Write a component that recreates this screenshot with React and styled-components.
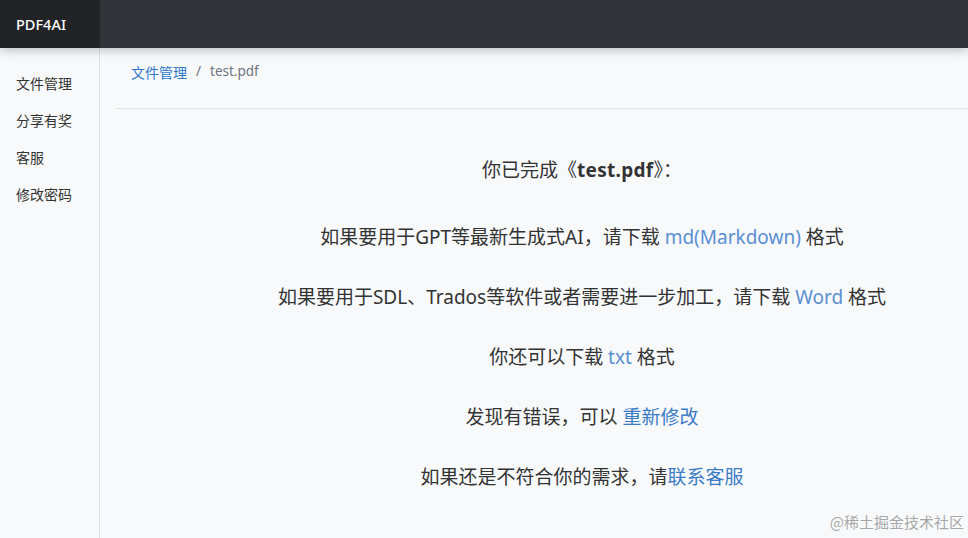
import styled, { createGlobalStyle } from "styled-components";

const GlobalStyle = createGlobalStyle`
  * { box-sizing: border-box; }
  html, body { margin: 0; padding: 0; height: 100%; }
  body {
    font-family: "Noto Sans", "Noto Sans CJK SC", sans-serif;
    background: #f8f9fb;
    color: #212529;
    overflow: hidden;
  }
  #root { height: 100%; }
`;

const Page = styled.div`
  position: relative;
  width: 968px;
  height: 538px;
  display: flex;
  flex-direction: column;
  background: #f8f9fb;
`;

const TopBar = styled.header`
  height: 48px;
  flex: none;
  display: flex;
  background: #303338;
  box-shadow: 0 2px 10px rgba(0, 0, 0, 0.25);
  position: relative;
  z-index: 2;
`;

const Brand = styled.div`
  width: 100px;
  display: flex;
  align-items: center;
  padding-left: 16px;
  background: #212327;
  color: #fff;
  font-size: 14.5px;
  font-weight: 500;
`;

const Body = styled.div`
  flex: 1;
  display: flex;
  min-height: 0;
`;

const Sidebar = styled.nav`
  width: 100px;
  flex: none;
  background: #f8f9fa;
  box-shadow: inset -1px 0 0 rgba(0, 0, 0, 0.1);
  padding-top: 25px;
  display: flex;
  flex-direction: column;
  gap: 17px;
`;

const NavItem = styled.a`
  padding-left: 16px;
  font-family: "Noto Sans CJK SC", sans-serif;
  font-size: 14px;
  line-height: 20px;
  color: #333;
  text-decoration: none;
`;

const Main = styled.main`
  flex: 1;
  padding-left: 16px;
`;

const Crumbs = styled.div`
  height: 61px;
  display: flex;
  align-items: flex-start;
  padding: 14px 0 0 15px;
  border-bottom: 1px solid #dee2e6;
  font-size: 13.5px;
  color: #6c757d;
`;

const CrumbLink = styled.a`
  color: #2f76c9;
  font-size: 14px;
  text-decoration: none;
`;

const Sep = styled.span`
  padding: 0 9px;
`;

const Content = styled.section`
  padding: 48px 0 0 80px;
  display: flex;
  flex-direction: column;
  align-items: center;
  gap: 34px;
  font-size: 19px;
  line-height: 26px;
  color: #333;
`;

const Line = styled.p`
  margin: 0;
  white-space: nowrap;
`;

const Title = styled(Line)`
  margin-bottom: 7px;

  b {
    font-weight: 700;
    letter-spacing: 0.3px;
  }
`;

const Link = styled.a`
  color: ${(p) => (p.$strong ? "#3b7cc6" : "#5a8fd3")};
  text-decoration: none;
`;

const Watermark = styled.div`
  position: absolute;
  right: 4px;
  bottom: 6px;
  font-family: "Noto Sans CJK SC", sans-serif;
  font-size: 15px;
  color: rgba(130, 130, 130, 0.7);
`;

const App = () => {
  const menu = ["文件管理", "分享有奖", "客服", "修改密码"];

  return (
    <Page>
      <GlobalStyle />
      <TopBar>
        <Brand>PDF4AI</Brand>
      </TopBar>
      <Body>
        <Sidebar>
          {menu.map((m) => (
            <NavItem key={m} href="#">
              {m}
            </NavItem>
          ))}
        </Sidebar>
        <Main>
          <Crumbs>
            <CrumbLink href="#">文件管理</CrumbLink>
            <Sep>/</Sep>
            <span>test.pdf</span>
          </Crumbs>
          <Content>
            <Title>
              你已完成《<b>test.pdf</b>》：
            </Title>
            <Line>
              如果要用于GPT等最新生成式AI，请下载 <Link href="#">md(Markdown)</Link> 格式
            </Line>
            <Line>
              如果要用于SDL、Trados等软件或者需要进一步加工，请下载 <Link href="#">Word</Link> 格式
            </Line>
            <Line>
              你还可以下载 <Link href="#">txt</Link> 格式
            </Line>
            <Line>
              发现有错误，可以 <Link $strong href="#">重新修改</Link>
            </Line>
            <Line>
              如果还是不符合你的需求，请<Link $strong href="#">联系客服</Link>
            </Line>
          </Content>
        </Main>
      </Body>
      <Watermark>@稀土掘金技术社区</Watermark>
    </Page>
  );
};

export default App;
